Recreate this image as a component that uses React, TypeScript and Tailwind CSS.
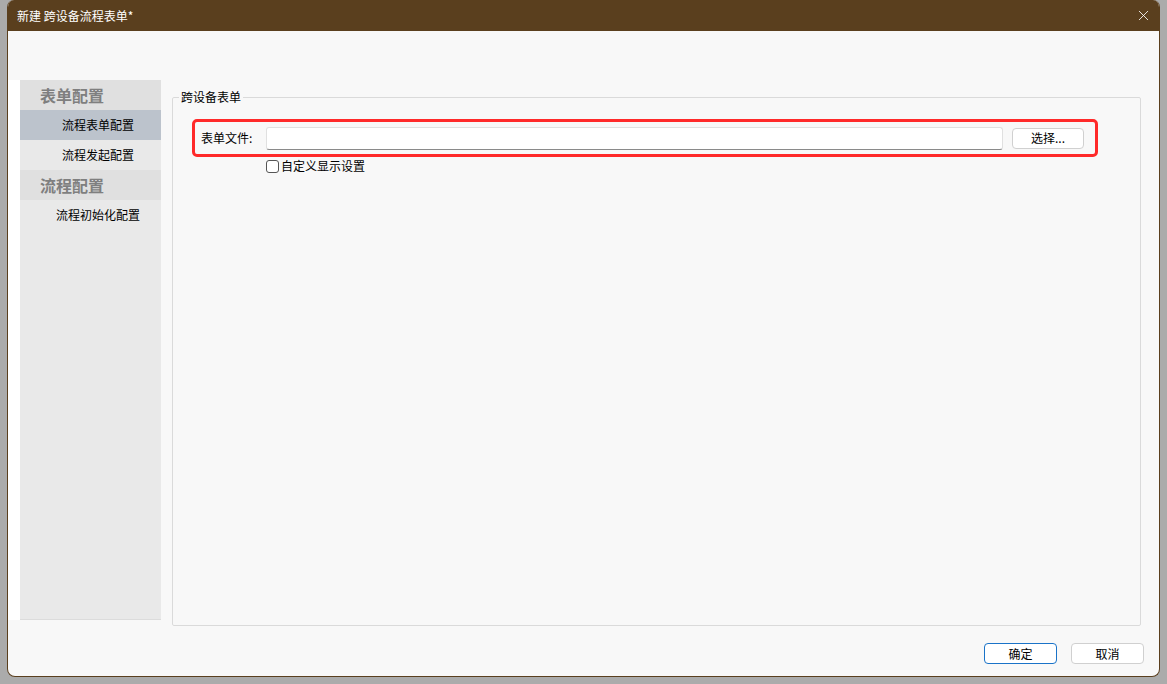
import { X } from 'lucide-react';

const FONT = { fontFamily: '"Microsoft YaHei", "Noto Sans CJK SC", "Liberation Sans", sans-serif' };

const NAV = [
  {
    title: '表单配置',
    items: [
      { label: '流程表单配置', active: true, indent: 'pl-[42px]' },
      { label: '流程发起配置', active: false, indent: 'pl-[42px]' },
    ],
  },
  {
    title: '流程配置',
    items: [{ label: '流程初始化配置', active: false, indent: 'pl-[36px]' }],
  },
];

function Sidebar() {
  return (
    <div className="flex h-[540px] w-[153px] bg-white pl-[12px]">
      <div className="flex w-[141px] flex-col border-b border-[#dcdcdc] bg-[#e9e9e9]">
        {NAV.map((g) => (
          <div key={g.title}>
            <div className="flex h-[30px] items-center bg-[#e0e0e0] pl-[20px] text-[16px] font-bold text-[#7f7f7f]">
              {g.title}
            </div>
            {g.items.map((it) => (
              <div
                key={it.label}
                className={`flex h-[30px] items-center text-[12px] text-black ${it.indent} ${
                  it.active ? 'bg-[#bcc3cc]' : ''
                }`}
              >
                {it.label}
              </div>
            ))}
          </div>
        ))}
      </div>
    </div>
  );
}

function FormPanel() {
  return (
    <div className="relative ml-[11px] mt-[17px] h-[529px] w-[969px] rounded-[2px] border border-[#dadada]">
      {/* legend */}
      <div className="absolute left-[6px] top-[-9px] bg-[#f8f8f8] px-[2px] text-[12px] leading-[16px] text-black">
        跨设备表单
      </div>

      <div className="ml-[19px] mt-[21px] flex h-[38px] w-[906px] items-center rounded-[5px] border-[3px] border-[#ff2a2a] pl-[6px]">
        <span className="w-[65px] text-[12px] text-black">表单文件:</span>
        <div className="h-[23px] w-[737px] rounded-[3px] border border-[#e0e0e0] border-b-[#8a8a8a] bg-white" />
        <button className="ml-[9px] flex h-[21px] w-[72px] items-center justify-center rounded-[4px] border border-[#d0d0d0] bg-white text-[12px] text-black">
          选择...
        </button>
      </div>

      <label className="ml-[93px] mt-[1px] flex items-center gap-[2px] text-[12px] leading-[16px] text-black">
        <span className="inline-block h-[13px] w-[13px] rounded-[3px] border border-[#555] bg-white" />
        自定义显示设置
      </label>
    </div>
  );
}

export default function App() {
  return (
    <div className="h-[684px] w-[1167px] bg-[#ababab] pl-[7px]" style={FONT}>
      <div className="flex h-[677px] w-[1153px] flex-col overflow-hidden rounded-[8px] rounded-t-[7px] border border-t-0 border-[#5a3f1e] bg-[#f8f8f8]">
        {/* Title bar */}
        <div className="flex h-[31px] shrink-0 items-center justify-between bg-[#5a3f1e] pl-[9px] pr-[7px]">
          <span className="text-[12px] text-white">新建 跨设备流程表单*</span>
          <X className="h-[17px] w-[17px] text-white" strokeWidth={1.2} />
        </div>

        <div className="mt-[49px] flex">
          <Sidebar />
          <FormPanel />
        </div>

        <div className="mt-[17px] flex justify-end gap-[14px] pr-[15px]">
          <button className="flex h-[21px] w-[73px] items-center justify-center rounded-[4px] border border-[#1a73c8] bg-white text-[12px] text-black">
            确定
          </button>
          <button className="flex h-[21px] w-[73px] items-center justify-center rounded-[4px] border border-[#d0d0d0] bg-white text-[12px] text-black">
            取消
          </button>
        </div>
      </div>
    </div>
  );
}
